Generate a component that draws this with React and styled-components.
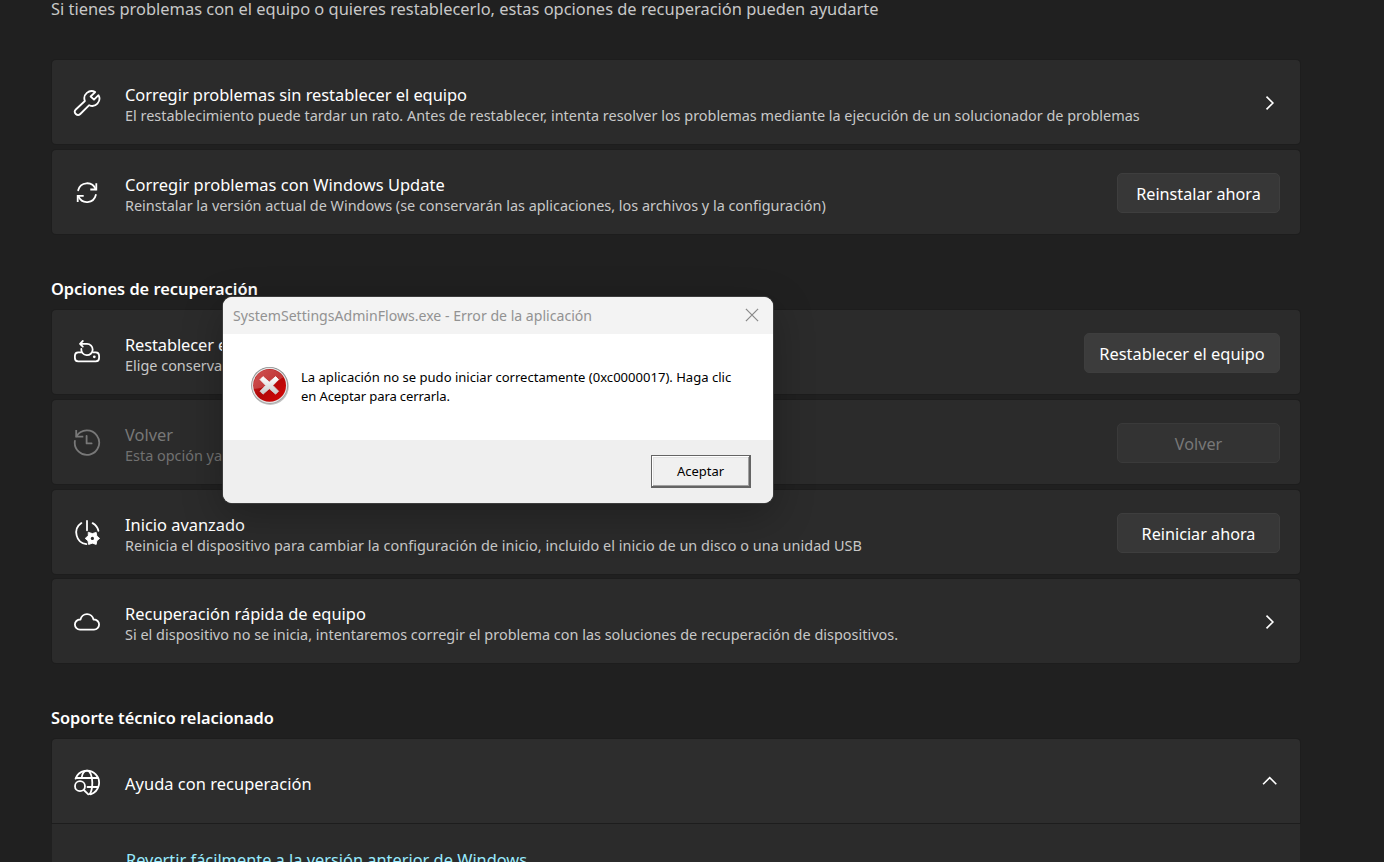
import React from "react";
import styled, { createGlobalStyle } from "styled-components";

const GlobalStyle = createGlobalStyle`
  * {
    box-sizing: border-box;
  }
  body {
    margin: 0;
    background: #202020;
    font-family: "Noto Sans", "Open Sans", sans-serif;
    color: #ffffff;
  }
`;

const Page = styled.main`
  height: 862px;
  overflow: hidden;
  display: flex;
  flex-direction: column;
  padding: 0 84px 0 52px;
`;

const Intro = styled.p`
  flex: none;
  height: 60px;
  margin: 0 0 0 -1px;
  font-size: 16.43px;
  line-height: 18px;
  color: #c8c8c8;
  white-space: nowrap;
`;

const SectionTitle = styled.h2`
  flex: none;
  margin: 0 0 0 -1px;
  padding-top: 44px;
  height: 76px;
  font-size: 16.37px;
  line-height: 22px;
  font-weight: 600;
`;

const CardList = styled.div`
  flex: none;
  display: flex;
  flex-direction: column;
  gap: 6px;
`;

const Card = styled.section`
  flex: none;
  display: flex;
  align-items: center;
  height: 84px;
  margin-top: ${(p) => (p.$tight ? "-1px" : "0")};
  padding: 2px 20px 0 21px;
  background: ${(p) => (p.$open ? "#2d2d2d" : "#2b2b2b")};
  border-radius: ${(p) => (p.$open ? "4px 4px 0 0" : "4px")};
  box-shadow: 0 0 0 1px #1d1d1d;
  color: ${(p) => (p.$disabled ? "#787878" : "#ffffff")};
`;

const CardIcon = styled.svg`
  flex: none;
  width: 28px;
  height: 28px;
  margin-right: 24px;
  fill: none;
  stroke: currentColor;
  stroke-width: 1.8;
  stroke-linecap: round;
  stroke-linejoin: round;
`;

const CardText = styled.div`
  flex: 1;
  min-width: 0;
  padding-top: 3px;
  white-space: nowrap;
`;

const CardTitle = styled.h3`
  margin: 0;
  font-size: 16.42px;
  line-height: 22px;
  font-weight: 400;
  letter-spacing: ${(p) => p.$track || 0}px;
`;

const CardDesc = styled.p`
  margin: 0;
  font-size: 14.43px;
  line-height: 20px;
  letter-spacing: ${(p) => p.$track || 0}px;
  color: ${(p) => (p.$disabled ? "#717171" : "#c8c8c8")};
`;

const Button = styled.button`
  flex: none;
  width: ${(p) => (p.$wide ? 196 : 163)}px;
  height: 40px;
  padding: 2px 0 0;
  border: 1px solid ${(p) => (p.disabled ? "#3a3a3a" : "#3e3e3e")};
  border-radius: 5px;
  background: ${(p) => (p.disabled ? "#333333" : p.$wide ? "#3c3c3c" : "#373737")};
  color: ${(p) => (p.disabled ? "#787878" : "#ffffff")};
  font-family: inherit;
  font-size: ${(p) => (p.$wide ? 16.4 : 16.2)}px;
  line-height: 22px;
`;

const Chevron = styled.svg`
  flex: none;
  width: 20px;
  height: 20px;
  fill: none;
  stroke: #ffffff;
  stroke-width: 1.6;
`;

const SupportBody = styled.div`
  flex: none;
  height: 60px;
  margin-top: 1px;
  padding: 25px 0 0 74px;
  background: #2b2b2b;
`;

const SupportLink = styled.a`
  display: block;
  font-size: 16.38px;
  line-height: 22px;
  color: #99ebff;
`;

const Dialog = styled.div`
  position: absolute;
  top: 297px;
  left: 223px;
  width: 550px;
  height: 206px;
  display: flex;
  flex-direction: column;
  overflow: hidden;
  border-radius: 9px;
  background: #ffffff;
  color: #000000;
  box-shadow: 0 0 0 1px #3c3c3c, 0 12px 40px rgba(0, 0, 0, 0.28);
`;

const TitleBar = styled.header`
  display: flex;
  align-items: center;
  justify-content: space-between;
  height: 37px;
  padding: 0 14px 0 10px;
  background: #f3f3f3;
  font-size: 14.1px;
  line-height: 20px;
  color: #929292;
`;

const CloseIcon = styled.svg`
  width: 14px;
  height: 14px;
  margin-bottom: 1px;
  stroke: #8a8a8a;
  stroke-width: 1.2;
`;

const DialogBody = styled.div`
  flex: 1;
  display: flex;
  align-items: flex-start;
  padding: 32px 0 0 27px;
`;

const ErrorIcon = styled.svg`
  flex: none;
  width: 40px;
  height: 40px;
  margin-right: 11px;
`;

const Message = styled.p`
  margin: 2px 0 0;
  font-size: 13.06px;
  line-height: 19px;
  white-space: nowrap;
`;

const LastLine = styled.span`
  letter-spacing: -0.12px;
`;

const DialogFooter = styled.footer`
  display: flex;
  justify-content: flex-end;
  height: 63px;
  padding: 15px 22px 0 0;
  background: #efefef;
`;

// classic 3d push button with the default frame
const AcceptButton = styled.button`
  width: 100px;
  height: 33px;
  padding: 0 0 1px;
  border: 1px solid #646464;
  border-right-width: 2px;
  border-bottom-width: 2px;
  border-radius: 0;
  background: #f0f0f0;
  box-shadow: inset 1px 1px 0 #ffffff, inset -1px -1px 0 #a0a0a0,
    inset 2px 2px 0 #e3e3e3;
  color: #000000;
  font-family: inherit;
  font-size: 13px;
`;

const WrenchIcon = () => (
  <CardIcon viewBox="0 0 28 28">
    <path d="M22.2 3.1A7.2 7.2 0 0 0 11.9 12L2.8 20.5a3.1 3.1 0 0 0 4.5 4.5L16.2 16.2A7.2 7.2 0 0 0 25.5 6.2L21 10.7L17.6 7.5Z" />
  </CardIcon>
);

const SyncIcon = () => (
  <CardIcon viewBox="0 0 28 28">
    <path d="M5.2 11.3A9.1 9.1 0 0 1 22.6 10.2" />
    <path d="M22.8 16A9.1 9.1 0 0 1 5.5 17.4" />
    <path d="M23.3 5.2V10.5H18.2M4.7 22.1V16.8H9.8" strokeLinecap="square" strokeLinejoin="miter" />
  </CardIcon>
);

const ResetIcon = () => (
  <CardIcon viewBox="0 1 28 28">
    <path d="M9.8 3L7 5.8L9.8 8.6M7 5.8H14A5.7 5.7 0 1 1 8.3 11" />
    <path d="M8 14.4H5.2A3.4 3.4 0 0 0 1.9 17.7V20A3.4 3.4 0 0 0 5.2 23.4H22.8A3.4 3.4 0 0 0 26.1 20V17.7A3.4 3.4 0 0 0 22.8 14.4H20" />
    <circle cx="21.3" cy="18.8" r="1.4" fill="currentColor" stroke="none" />
  </CardIcon>
);

const HistoryIcon = () => (
  <CardIcon viewBox="0 1 28 28">
    <path d="M1.9 12.8A12.2 12.2 0 1 0 3.6 8.2" />
    <path d="M3.2 2.9V8.7H9.4" strokeLinecap="square" strokeLinejoin="miter" />
    <path d="M13.6 7.8V15.4H18.6" />
  </CardIcon>
);

const PowerGearIcon = () => (
  <CardIcon viewBox="0 0 28 28">
    <path d="M14 2V11.3" />
    <path d="M8.4 4.1A11.6 11.6 0 0 0 13.4 25.2M19.6 4.1A11.6 11.6 0 0 1 25.4 11.8" />
    <path
      d="M15.6 13.4L19.4 14.6L23.2 13.4L23.8 17L26.6 19.4L23.8 21.8L23.2 25.4L19.4 24.2L15.6 25.4L15 21.8L12.2 19.4L15 17Z"
      fill="currentColor"
      strokeWidth="0.9"
    />
    <circle cx="19.4" cy="19.4" r="1.6" fill="#2b2b2b" stroke="none" />
  </CardIcon>
);

const CloudIcon = () => (
  <CardIcon viewBox="0 0.5 28 28">
    <path d="M7 22.2A5.1 5.1 0 0 1 7 12H7.5A6.6 6.6 0 0 1 20.5 12H21A5.1 5.1 0 0 1 21 22.2Z" />
  </CardIcon>
);

const GlobeSearchIcon = () => (
  <CardIcon viewBox="0 -1 28 28">
    <path d="M2.6 9.6A12.1 12.1 0 1 1 17.6 25.3" />
    <path d="M3.2 9H24.8M14.5 18H24.8" />
    <path d="M8.6 9C9.2 4.4 11.2 1.7 14 1.7C17.2 1.7 19.3 7.2 19.3 13.7C19.3 18.6 18.4 23 16.6 25" />
    <circle cx="7" cy="17.2" r="5" />
    <path d="M10.8 21L15.3 25.4" />
  </CardIcon>
);

const ChevronRight = () => (
  <Chevron viewBox="0 0 20 20">
    <path d="M6.5 3.6L12.9 10L6.5 16.4" />
  </Chevron>
);

const ChevronUp = () => (
  <Chevron viewBox="0 0 20 20">
    <path d="M3.1 12.2L9.7 5.6L16.3 12.2" />
  </Chevron>
);

const SettingCard = ({ icon, title, titleTrack, desc, track, disabled, open, tight, children }) => (
  <Card $disabled={disabled} $open={open} $tight={tight}>
    {icon}
    <CardText>
      <CardTitle $track={titleTrack}>{title}</CardTitle>
      {desc && (
        <CardDesc $track={track} $disabled={disabled}>
          {desc}
        </CardDesc>
      )}
    </CardText>
    {children}
  </Card>
);

const ErrorDialog = () => (
  <Dialog role="alertdialog">
    <TitleBar>
      <span>SystemSettingsAdminFlows.exe - Error de la aplicación</span>
      <CloseIcon viewBox="0 0 14 14">
        <path d="M0.9 0.9L13.1 13.1M13.1 0.9L0.9 13.1" />
      </CloseIcon>
    </TitleBar>
    <DialogBody>
      <ErrorIcon viewBox="0 0 40 40">
        <defs>
          <linearGradient id="ring" x1="0" y1="0" x2="0" y2="1">
            <stop offset="0" stopColor="#8c8c8c" />
            <stop offset="1" stopColor="#a8a8a8" />
          </linearGradient>
          <linearGradient id="red" x1="0" y1="0" x2="1" y2="1">
            <stop offset="0" stopColor="#c62a2a" />
            <stop offset="0.5" stopColor="#b20808" />
            <stop offset="1" stopColor="#d80808" />
          </linearGradient>
          <linearGradient id="cross" x1="0" y1="0" x2="0" y2="1">
            <stop offset="0" stopColor="#ffffff" />
            <stop offset="1" stopColor="#cacaca" />
          </linearGradient>
        </defs>
        <circle cx="20.2" cy="20.4" r="18.6" fill="#c4c4c4" />
        <circle cx="19.6" cy="19.4" r="18.5" fill="url(#ring)" />
        <circle cx="19.6" cy="19.4" r="17.6" fill="#e6e6e6" />
        <circle cx="19.6" cy="19.4" r="16.4" fill="url(#red)" />
        <path d="M3.8 20.2A15.8 15.8 0 0 1 33.3 11.4C29 13 22 20.5 4.4 23Z" fill="#ffffff" opacity="0.2" />
        <path
          d="M13 10.6L19.3 16.1L25.6 10.6L28.6 13.6L22.9 19.4L28.6 25.2L25.6 28.2L19.3 22.7L13 28.2L10 25.2L15.7 19.4L10 13.6Z"
          fill="url(#cross)"
          stroke="url(#cross)"
          strokeWidth="0.8"
          strokeLinejoin="round"
        />
      </ErrorIcon>
      <Message>
        La aplicación no se pudo iniciar correctamente (0xc0000017). Haga clic
        <br />
        <LastLine>en Aceptar para cerrarla.</LastLine>
      </Message>
    </DialogBody>
    <DialogFooter>
      <AcceptButton>Aceptar</AcceptButton>
    </DialogFooter>
  </Dialog>
);

export default function App() {
  return (
    <>
      <GlobalStyle />
      <Page>
        <Intro>
          Si tienes problemas con el equipo o quieres restablecerlo, estas opciones de recuperación pueden ayudarte
        </Intro>
        <CardList>
          <SettingCard
            icon={<WrenchIcon />}
            title="Corregir problemas sin restablecer el equipo"
            titleTrack={-0.03}
            desc="El restablecimiento puede tardar un rato. Antes de restablecer, intenta resolver los problemas mediante la ejecución de un solucionador de problemas"
          >
            <ChevronRight />
          </SettingCard>
          <SettingCard
            icon={<SyncIcon />}
            title="Corregir problemas con Windows Update"
            titleTrack={0.05}
            desc="Reinstalar la versión actual de Windows (se conservarán las aplicaciones, los archivos y la configuración)"
            track={-0.01}
          >
            <Button>Reinstalar ahora</Button>
          </SettingCard>
        </CardList>

        <SectionTitle>Opciones de recuperación</SectionTitle>
        <CardList>
          <SettingCard
            icon={<ResetIcon />}
            title="Restablecer este equipo"
            titleTrack={-0.1}
            desc="Elige conservar o quitar los archivos personales"
          >
            <Button $wide>Restablecer el equipo</Button>
          </SettingCard>
          <SettingCard icon={<HistoryIcon />} title="Volver" desc="Esta opción ya no está disponible" disabled>
            <Button disabled>Volver</Button>
          </SettingCard>
          <SettingCard
            icon={<PowerGearIcon />}
            title="Inicio avanzado"
            desc="Reinicia el dispositivo para cambiar la configuración de inicio, incluido el inicio de un disco o una unidad USB"
            track={0.04}
          >
            <Button>Reiniciar ahora</Button>
          </SettingCard>
          <SettingCard
            icon={<CloudIcon />}
            title="Recuperación rápida de equipo"
            titleTrack={0.04}
            desc="Si el dispositivo no se inicia, intentaremos corregir el problema con las soluciones de recuperación de dispositivos."
            track={0.015}
            tight
          >
            <ChevronRight />
          </SettingCard>
        </CardList>

        <SectionTitle>Soporte técnico relacionado</SectionTitle>
        <SettingCard icon={<GlobeSearchIcon />} title="Ayuda con recuperación" titleTrack={0.05} open>
          <ChevronUp />
        </SettingCard>
        <SupportBody>
          <SupportLink>Revertir fácilmente a la versión anterior de Windows</SupportLink>
        </SupportBody>
      </Page>
      <ErrorDialog />
    </>
  );
}
